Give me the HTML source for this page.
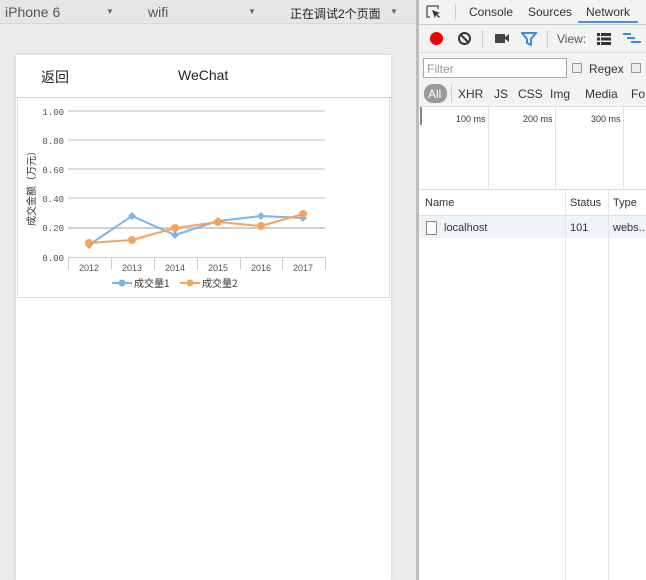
<!DOCTYPE html>
<html><head><meta charset="utf-8"><style>
*{margin:0;padding:0;box-sizing:border-box}
body{width:646px;height:580px;overflow:hidden;position:relative;background:#fff;font-family:"Liberation Sans","Noto Sans CJK SC",sans-serif}
.a{position:absolute}
.t{font-size:12px;color:#333;white-space:nowrap}
</style></head><body>
<div class="a" style="left:0;top:0;width:416px;height:580px;background:#ebebeb"></div>
<div class="a" style="left:0;top:0;width:416px;height:24px;background:#e6e6e6;border-bottom:1px solid #d8d8d8"></div>
<div class="a t" style="left:5px;top:4px;font-size:14px;color:#555">iPhone 6</div>
<div class="a t" style="left:106px;top:7px;font-size:8px;color:#666">▼</div>
<div class="a t" style="left:148px;top:4px;font-size:14px;color:#555">wifi</div>
<div class="a t" style="left:248px;top:7px;font-size:8px;color:#666">▼</div>
<div class="a t" style="left:290px;top:5px;font-size:12px;color:#222">正在调试2个页面</div>
<div class="a t" style="left:390px;top:7px;font-size:8px;color:#666">▼</div>
<div class="a" style="left:416px;top:0;width:3px;height:580px;background:#bdbdbd"></div>
<div class="a" style="left:16px;top:55px;width:375px;height:525px;background:#fff;box-shadow:0 0 3px #ccc"></div>
<div class="a t" style="left:41px;top:67px;font-size:14px;color:#222">返回</div>
<div class="a t" style="left:178px;top:67px;font-size:14px;color:#222">WeChat</div>
<div class="a" style="left:16px;top:97px;width:375px;height:1px;background:#d0d0d0"></div>
<div class="a" style="left:17px;top:98px;width:373px;height:200px;border:1px solid #ddd;border-top:none"></div>
<svg class="a" style="left:0;top:0" width="416" height="300">
<g stroke="#e0e0e0" stroke-width="2">
<line x1="68" y1="111" x2="325" y2="111"/><line x1="68" y1="140" x2="325" y2="140"/><line x1="68" y1="169" x2="325" y2="169"/><line x1="68" y1="198" x2="325" y2="198"/><line x1="68" y1="228" x2="325" y2="228" stroke="#d0d0d0"/>
</g>
<g stroke="#ccc" stroke-width="1"><line x1="68" y1="257.5" x2="325" y2="257.5"/>
<line x1="68.5" y1="257" x2="68.5" y2="270"/><line x1="111.5" y1="257" x2="111.5" y2="270"/><line x1="154.5" y1="257" x2="154.5" y2="270"/><line x1="197.5" y1="257" x2="197.5" y2="270"/><line x1="240.5" y1="257" x2="240.5" y2="270"/><line x1="282.5" y1="257" x2="282.5" y2="270"/><line x1="325.5" y1="257" x2="325.5" y2="270"/></g>
<g font-family="Liberation Mono,monospace" font-size="9" fill="#555" text-anchor="end">
<text x="64" y="115">1.00</text><text x="64" y="144">0.80</text><text x="64" y="173">0.60</text><text x="64" y="202">0.40</text><text x="64" y="231">0.20</text><text x="64" y="261">0.00</text></g>
<g font-family="Liberation Sans,sans-serif" font-size="9" fill="#555" text-anchor="middle">
<text x="89" y="271">2012</text><text x="132" y="271">2013</text><text x="175" y="271">2014</text><text x="218" y="271">2015</text><text x="261" y="271">2016</text><text x="303" y="271">2017</text></g>
<text transform="translate(35,226) rotate(-90)" font-family="Noto Sans CJK SC,sans-serif" font-size="10" fill="#333">成交金额（万元）</text>
<polyline points="89,245 132,216 175,235 218,221 261,216 303,218" fill="none" stroke="#7cb5ec" stroke-width="2"/>
<g fill="#7cb5ec"><path d="M89 241l4 4-4 4-4-4z"/><path d="M132 212l4 4-4 4-4-4z"/><path d="M175 231l4 4-4 4-4-4z"/><path d="M218 217l4 4-4 4-4-4z"/><path d="M261 212l4 4-4 4-4-4z"/><path d="M303 214l4 4-4 4-4-4z"/></g>
<polyline points="89,243 132,240 175,228 218,222 261,226 303,214" fill="none" stroke="#f7a35c" stroke-width="2"/>
<g fill="#f7a35c"><circle cx="89" cy="243" r="4"/><circle cx="132" cy="240" r="4"/><circle cx="175" cy="228" r="4"/><circle cx="218" cy="222" r="4"/><circle cx="261" cy="226" r="4"/><circle cx="303" cy="214" r="4"/></g>
<line x1="112" y1="283" x2="132" y2="283" stroke="#7cb5ec" stroke-width="2"/><circle cx="122" cy="283" r="3.5" fill="#7cb5ec"/>
<line x1="180" y1="283" x2="200" y2="283" stroke="#f7a35c" stroke-width="2"/><circle cx="190" cy="283" r="3.5" fill="#f7a35c"/>
<g font-family="Noto Sans CJK SC,sans-serif" font-size="10" fill="#333"><text x="134" y="287">成交量1</text><text x="202" y="287">成交量2</text></g>
</svg>
<div class="a" style="left:419px;top:0;width:227px;height:580px;background:#fff"></div>
<div class="a" style="left:419px;top:0;width:227px;height:106px;background:#f3f3f3"></div>
<div class="a" style="left:419px;top:24px;width:227px;height:1px;background:#ccc"></div>
<svg class="a" style="left:425px;top:4px" width="18" height="16"><path d="M2 2h11v3M2 2v11h3" fill="none" stroke="#444" stroke-width="1.2"/><path d="M7 6l8 3-3 1 3 3-1 1-3-3-1 3z" fill="#333"/></svg>
<div class="a" style="left:455px;top:4px;width:1px;height:16px;background:#ccc"></div>
<div class="a t" style="left:469px;top:5px;color:#333">Console</div>
<div class="a t" style="left:528px;top:5px;color:#333">Sources</div>
<div class="a t" style="left:586px;top:5px;color:#333">Network</div>
<div class="a" style="left:578px;top:21px;width:60px;height:2px;background:#4b8ce6"></div>
<div class="a" style="left:430px;top:32px;width:13px;height:13px;border-radius:50%;background:#e00"></div>
<svg class="a" style="left:457px;top:31px" width="15" height="15"><circle cx="7.5" cy="7.5" r="5.5" fill="none" stroke="#333" stroke-width="2"/><line x1="3.5" y1="3.5" x2="11.5" y2="11.5" stroke="#333" stroke-width="2"/></svg>
<div class="a" style="left:482px;top:30px;width:1px;height:18px;background:#ccc"></div>
<div class="a" style="left:495px;top:34px;width:10px;height:9px;background:#444"></div>
<div class="a" style="left:504px;top:34px;width:0;height:0;border-top:4.5px solid transparent;border-bottom:4.5px solid transparent;border-right:5px solid #444"></div>
<svg class="a" style="left:521px;top:31px" width="16" height="15"><path d="M1 2h14l-5 6v6l-4-2v-4z" fill="none" stroke="#3a8ae6" stroke-width="2"/></svg>
<div class="a" style="left:547px;top:30px;width:1px;height:18px;background:#ccc"></div>
<div class="a t" style="left:557px;top:32px;color:#555">View:</div>
<svg class="a" style="left:597px;top:33px" width="14" height="12"><g fill="#333"><rect x="0" y="0" width="3" height="3"/><rect x="4" y="0" width="10" height="3"/><rect x="0" y="4.5" width="3" height="3"/><rect x="4" y="4.5" width="10" height="3"/><rect x="0" y="9" width="3" height="3"/><rect x="4" y="9" width="10" height="3"/></g></svg>
<svg class="a" style="left:623px;top:33px" width="18" height="12"><g fill="#3a8ae6"><rect x="0" y="0" width="8" height="2"/><rect x="4" y="4" width="8" height="2"/><rect x="8" y="8" width="10" height="2"/></g></svg>
<div class="a" style="left:419px;top:52px;width:227px;height:1px;background:#ddd"></div>
<div class="a" style="left:423px;top:58px;width:144px;height:20px;background:#fff;border:1px solid #aaa"></div>
<div class="a t" style="left:427px;top:62px;color:#999">Filter</div>
<div class="a" style="left:572px;top:63px;width:10px;height:10px;border:1px solid #999;background:#eee"></div>
<div class="a t" style="left:589px;top:62px;color:#333">Regex</div>
<div class="a" style="left:631px;top:63px;width:10px;height:10px;border:1px solid #999;background:#eee"></div>
<div class="a" style="left:424px;top:84px;width:23px;height:19px;border-radius:9px;background:#999"></div>
<div class="a t" style="left:428px;top:87px;color:#fff">All</div>
<div class="a" style="left:451px;top:85px;width:1px;height:17px;background:#ccc"></div>
<div class="a t" style="left:458px;top:87px;color:#333">XHR</div>
<div class="a t" style="left:494px;top:87px;color:#333">JS</div>
<div class="a t" style="left:518px;top:87px;color:#333">CSS</div>
<div class="a t" style="left:550px;top:87px;color:#333">Img</div>
<div class="a t" style="left:585px;top:87px;color:#333">Media</div>
<div class="a t" style="left:631px;top:87px;color:#333">Fo</div>
<div class="a" style="left:419px;top:106px;width:227px;height:1px;background:#ddd"></div>
<div class="a" style="left:420px;top:107px;width:2px;height:18px;background:#888"></div>
<div class="a" style="left:488px;top:107px;width:1px;height:83px;background:#e4e4e4"></div>
<div class="a" style="left:555px;top:107px;width:1px;height:83px;background:#e4e4e4"></div>
<div class="a" style="left:623px;top:107px;width:1px;height:83px;background:#e4e4e4"></div>
<div class="a t" style="left:456px;top:114px;font-size:9px">100 ms</div>
<div class="a t" style="left:523px;top:114px;font-size:9px">200 ms</div>
<div class="a t" style="left:591px;top:114px;font-size:9px">300 ms</div>
<div class="a" style="left:419px;top:189px;width:227px;height:1px;background:#ddd"></div>
<div class="a" style="left:419px;top:215px;width:227px;height:1px;background:#ddd"></div>
<div class="a" style="left:419px;top:216px;width:227px;height:22px;background:#eef4f7"></div>
<div class="a" style="left:565px;top:190px;width:1px;height:390px;background:#dde6ea"></div>
<div class="a" style="left:608px;top:190px;width:1px;height:390px;background:#dde6ea"></div>
<div class="a t" style="left:425px;top:197px;font-size:11px">Name</div>
<div class="a t" style="left:570px;top:197px;font-size:11px">Status</div>
<div class="a t" style="left:613px;top:197px;font-size:11px">Type</div>
<div class="a" style="left:426px;top:221px;width:11px;height:14px;border:1px solid #888;background:#fff"></div>
<div class="a t" style="left:444px;top:222px;font-size:11px">localhost</div>
<div class="a t" style="left:570px;top:222px;font-size:11px">101</div>
<div class="a t" style="left:613px;top:222px;font-size:11px">webs...</div>
</body></html>
